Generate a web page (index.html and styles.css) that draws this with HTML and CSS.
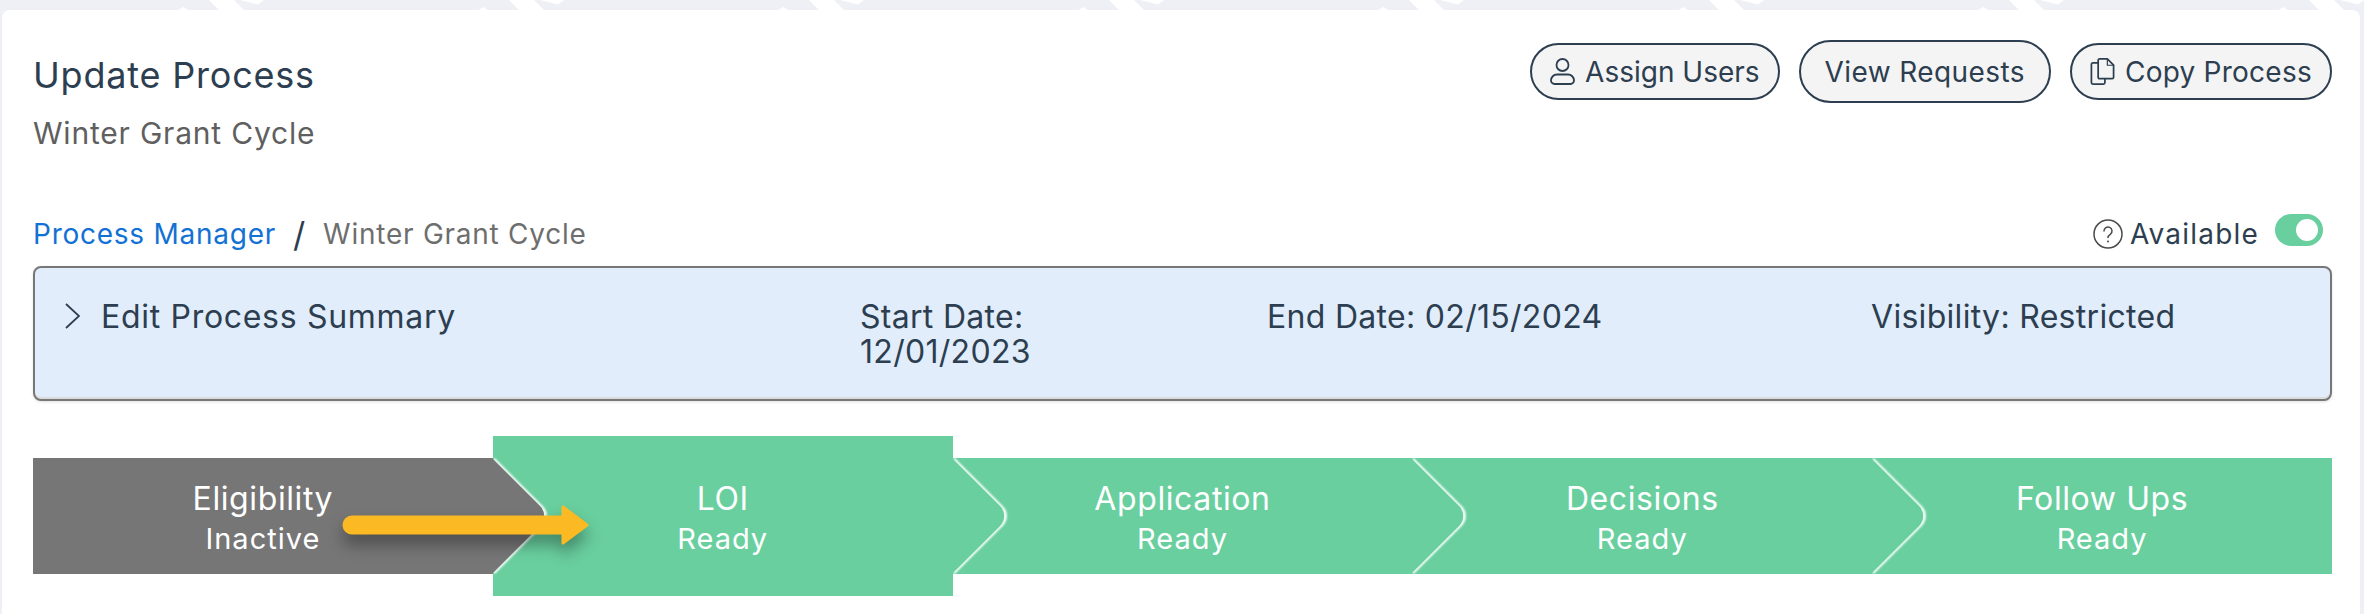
FILE: index.html
```html
<!DOCTYPE html>
<html lang="en">
<head>
  <meta charset="UTF-8" />
  <title>Update Process</title>
  <link rel="stylesheet" href="styles.css">
</head>
<body>
  <div class="card">
    <!-- Title and action buttons -->
    <header class="top-row">
      <div class="titles">
        <h1>Update Process</h1>
        <p class="subtitle">Winter Grant Cycle</p>
      </div>
      <div class="actions">
        <button class="pill">
          <svg class="pill-icon" viewBox="0 0 25 27" fill="none" stroke="currentColor" stroke-width="1.8">
            <circle cx="12.5" cy="7" r="6" />
            <path d="M7 16.500h11a6 6 0 0 1 6 6v0a3.500 3.500 0 0 1-3.500 3.500h-16A3.500 3.500 0 0 1 1 22.500v0a6 6 0 0 1 6-6z" />
          </svg>
          <span class="assign-label">Assign Users</span>
        </button>
        <button class="pill pill-big">View Requests</button>
        <button class="pill">
          <svg class="pill-icon" viewBox="0 0 25 28" fill="none" stroke="currentColor" stroke-width="1.8">
            <path d="M9.500 1h8l6.500 6.500V20a1.500 1.500 0 0 1-1.500 1.500h-13A1.500 1.500 0 0 1 8 20V2.500A1.500 1.500 0 0 1 9.500 1z" />
            <path d="M17.500 1v6.500H24" stroke-width="1.200" />
            <path d="M8 5H2.500A1.500 1.500 0 0 0 1 6.500v19A1.500 1.500 0 0 0 2.500 27h11a1.500 1.500 0 0 0 1.500-1.500v-4" />
          </svg>
          <span class="copy-label">Copy Process</span>
        </button>
      </div>
    </header>

    <!-- Breadcrumb and availability toggle -->
    <div class="crumb-row">
      <nav class="crumbs">
        <a href="#">Process Manager</a>
        <span class="slash">/</span>
        <span class="crumb-current">Winter Grant Cycle</span>
      </nav>
      <div class="available">
        <svg class="help-icon" viewBox="0 0 30 30" fill="none" stroke="#4a4a4a" stroke-width="1.500">
          <circle cx="15" cy="15" r="14" />
          <path d="M11 12a4 4 0 1 1 6.500 3.100c-1.500 1.100-2.500 1.900-2.500 3.400" stroke-linecap="round" />
          <circle cx="15" cy="22.500" r="1" fill="#4a4a4a" stroke="none" />
        </svg>
        <span class="avail-label">Available</span>
        <span class="toggle"><span class="knob"></span></span>
      </div>
    </div>

    <!-- Summary panel -->
    <section class="summary">
      <div class="sum-title">
        <svg class="chevron" viewBox="0 0 15 26" fill="none" stroke="#2c3e50" stroke-width="1.800">
          <path d="M1 1l13 12L1 25" />
        </svg>
        Edit Process Summary
      </div>
      <div>Start Date:<br>12/01/2023</div>
      <div>End Date: 02/15/2024</div>
      <div>Visibility: Restricted</div>
    </section>

    <!-- Process steps -->
    <div class="stepper">
      <div class="step step-off"><strong>Eligibility</strong><span>Inactive</span></div>
      <div class="step step-active"><strong>LOI</strong><span>Ready</span></div>
      <div class="step"><strong>Application</strong><span>Ready</span></div>
      <div class="step"><strong>Decisions</strong><span>Ready</span></div>
      <div class="step step-last"><strong>Follow Ups</strong><span>Ready</span></div>
      <svg class="callout" viewBox="0 0 250 70" width="250" height="70">
        <path d="M8 19h211v-10l24 18-24 18v-10H8a8 8 0 0 1 0-16z" fill="#fbb923" stroke="#fbb923" stroke-width="3" stroke-linejoin="round" />
      </svg>
    </div>
  </div>
</body>
</html>
```

FILE: styles.css
```css
/* Base */
* { box-sizing: border-box; margin: 0; padding: 0; }
html, body { height: 100%; overflow: hidden; }
body {
  font-family: 'Inter', 'Liberation Sans', sans-serif;
  color: #2c3e50;
  background-color: #eff0f5;
  /* faint white pattern peeking out above the sheet */
  background-image: url("data:image/svg+xml,%3Csvg xmlns='http://www.w3.org/2000/svg' width='300' height='10'%3E%3Cpath fill='%23fff' d='M209 0h25l10 10h-25zM240 0h24l-6 4.500zM179 10l4-3 5 3z'/%3E%3C/svg%3E");
  background-repeat: repeat-x;
  padding: 10px 4px 0 2px;
}

/* White sheet */
.card {
  height: 100%;
  background: #fff;
  border-radius: 8px 8px 0 0;
  padding: 30px 28px 0 31px;
}

/* Title row */
.top-row {
  display: flex;
  justify-content: space-between;
  align-items: flex-start;
}
h1 {
  font-size: 36px;
  font-weight: 400;
  letter-spacing: 0.8px;
  line-height: 44px;
  margin-top: 13px;
}
.subtitle {
  font-size: 30px;
  letter-spacing: 0.8px;
  line-height: 40px;
  margin-top: 16px;
  color: #5f5f5f;
}
.actions {
  display: flex;
  align-items: center;
  gap: 19px;
}
.pill {
  display: flex;
  align-items: center;
  justify-content: center;
  gap: 10px;
  height: 57px;
  padding: 0 18px;
  border: 2px solid #2c3e50;
  border-radius: 29px;
  background: #f4f4f4;
  color: #2c3e50;
  font: inherit;
  font-size: 28px;
}
.pill-big { height: 63px; border-radius: 32px; padding: 0 24px; letter-spacing: 0.4px; }
.copy-label { letter-spacing: 0.25px; }
.pill-icon { width: 25px; height: 27px; }

/* Breadcrumb row */
.crumb-row {
  display: flex;
  justify-content: space-between;
  align-items: center;
  height: 42px;
  margin-top: 60px;
}
.crumbs {
  display: flex;
  align-items: center;
  font-size: 28px;
  letter-spacing: 0.75px;
}
.crumbs a { color: #1271d4; text-decoration: none; }
.slash { font-size: 34px; margin: 0 17px; }
.crumb-current { color: #6e6e6e; }
.available {
  display: flex;
  align-items: center;
  font-size: 28px;
}
.avail-label { letter-spacing: 1.2px; }
.help-icon { width: 30px; height: 30px; margin-right: 7px; }
.toggle {
  display: flex;
  align-items: center;
  justify-content: flex-end;
  width: 48px;
  height: 32px;
  margin: -8px 9px 0 16px;
  padding-right: 5px;
  border-radius: 16px;
  background: #69cf9f;
}
.knob { width: 22px; height: 22px; border-radius: 50%; background: #fff; }

/* Summary panel */
.summary {
  display: grid;
  grid-template-columns: 825px 407px 604px 1fr;
  height: 135px;
  margin-top: 11px;
  padding-top: 31px;
  border: 2px solid #777;
  border-radius: 8px;
  background: #e1edfa;
  box-shadow: inset 0 -2px 0 #dcdcdc, 0 1px 3px rgba(0, 0, 0, 0.12);
  font-size: 32px;
  letter-spacing: 0.3px;
  line-height: 35px;
}
.sum-title { display: flex; align-items: flex-start; padding-left: 30px; letter-spacing: 0.7px; }
.chevron { width: 15px; height: 26px; margin: 4px 21px 0 0; }

/* Stepper */
.stepper {
  position: relative;
  display: flex;
  align-items: center;
  height: 160px;
  margin-top: 35px;
}
.step {
  position: relative;
  display: flex;
  flex-direction: column;
  align-items: center;
  justify-content: center;
  width: 460px;
  height: 116px;
  padding-top: 2px;
  background: #69cf9f;
  color: #fff;
}
.step strong { position: relative; z-index: 1; font-size: 32px; font-weight: 400; letter-spacing: 0.6px; line-height: 44px; }
.step span { position: relative; z-index: 1; font-size: 29px; letter-spacing: 1px; line-height: 36px; }
.step-off { background: #767676; z-index: 5; }
.step-active { height: 160px; z-index: 4; }
.step:nth-child(3) { z-index: 3; }
.step:nth-child(4) { z-index: 2; }
/* Arrow tip, a square turned on its corner */
.step::after {
  content: "";
  position: absolute;
  top: 50%;
  left: 100%;
  width: 82px;
  height: 82px;
  margin: -41px 0 0 -42px;
  background: inherit;
  border-radius: 0 14px 0 0;
  box-shadow: 2px -2px 2px rgba(255, 255, 255, 0.9);
  transform: rotate(45deg);
}
.step-last::after { display: none; }
.callout {
  position: absolute;
  left: 311px;
  top: 62px;
  z-index: 9;
  overflow: visible;
  filter: drop-shadow(0 10px 8px rgba(0, 0, 0, 0.35));
}
```
